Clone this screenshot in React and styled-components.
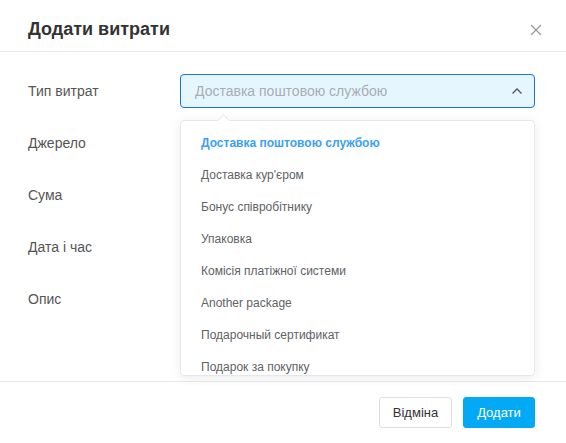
import React from 'react';
import styled, { createGlobalStyle } from 'styled-components';

const GlobalStyle = createGlobalStyle`
  html, body {
    margin: 0;
    padding: 0;
    background: #fff;
  }
  body {
    font-family: "Liberation Sans", Arial, sans-serif;
  }
`;

const Modal = styled.div`
  width: 566px;
  height: 443px;
  display: flex;
  flex-direction: column;
  background: #fff;
  overflow: hidden;
`;

const Header = styled.div`
  height: 52px;
  flex: none;
  box-sizing: border-box;
  display: flex;
  align-items: center;
  justify-content: space-between;
  padding: 8px 23px 0 28px;
  border-bottom: 1px solid #e8e8e8;
  h2 {
    margin: 0;
    font-size: 18px;
    font-weight: 700;
    color: #333;
  }
`;

const Close = styled.button`
  border: 0;
  background: none;
  padding: 0;
  width: 14px;
  height: 14px;
  display: flex;
  cursor: pointer;
`;

const Body = styled.div`
  flex: 1;
  display: flex;
  flex-direction: column;
  gap: 18px;
  padding: 22px 31px 0 28px;
`;

const Row = styled.div`
  display: flex;
  align-items: center;
  height: 34px;
`;

const Label = styled.div`
  width: 152px;
  flex: none;
  font-size: 14px;
  color: #555;
`;

const Field = styled.div`
  position: relative;
  flex: 1;
  height: 34px;
`;

const Select = styled.div`
  height: 100%;
  box-sizing: border-box;
  display: flex;
  align-items: center;
  justify-content: space-between;
  padding: 0 11px 0 14px;
  background: #e6f6fe;
  border: 1px solid #1a73e8;
  border-radius: 4px;
  font-size: 14px;
  color: #a8adb3;
`;

const Input = styled.div`
  height: 100%;
  box-sizing: border-box;
  border: 1px solid #dcdfe6;
  border-radius: 4px;
`;

const Dropdown = styled.div`
  position: absolute;
  top: 46px;
  left: 0;
  right: 0;
  height: 256px;
  box-sizing: border-box;
  background: #fff;
  border: 1px solid #e4e7ed;
  border-radius: 4px;
  box-shadow: 0 2px 12px rgba(0, 0, 0, 0.08);
  z-index: 10;
  &::before {
    content: '';
    position: absolute;
    top: -5px;
    left: 38px;
    width: 8px;
    height: 8px;
    background: #fff;
    border-left: 1px solid #e4e7ed;
    border-top: 1px solid #e4e7ed;
    transform: rotate(45deg);
  }
`;

const List = styled.ul`
  list-style: none;
  margin: 0;
  padding: 6px 0 0;
  height: 100%;
  box-sizing: border-box;
  overflow: hidden;
  border-radius: 4px;
`;

const Option = styled.li`
  height: 32px;
  line-height: 32px;
  padding: 0 20px;
  font-size: 12px;
  color: ${(p) => (p.$active ? '#3aa0f5' : '#606266')};
  font-weight: ${(p) => (p.$active ? 700 : 400)};
  white-space: nowrap;
`;

const Footer = styled.div`
  flex: none;
  display: flex;
  justify-content: flex-end;
  gap: 11px;
  padding: 15px 31px 15px 0;
  border-top: 1px solid #e8e8e8;
`;

const Button = styled.button`
  height: 31px;
  width: ${(p) => (p.$primary ? '72px' : '73px')};
  padding: 0;
  font-family: inherit;
  font-size: 13px;
  border-radius: 3px;
  cursor: pointer;
  border: 1px solid ${(p) => (p.$primary ? '#03a9f4' : '#dcdfe6')};
  background: ${(p) => (p.$primary ? '#03a9f4' : '#fff')};
  color: ${(p) => (p.$primary ? '#fff' : '#333')};
`;

const options = [
  'Доставка поштовою службою',
  'Доставка кур\'єром',
  'Бонус співробітнику',
  'Упаковка',
  'Комісія платіжної системи',
  'Another package',
  'Подарочный сертификат',
  'Подарок за покупку',
];

const labels = ['Джерело', 'Сума', 'Дата і час', 'Опис'];

const App = () => (
  <>
    <GlobalStyle />
    <Modal>
      <Header>
        <h2>Додати витрати</h2>
        <Close aria-label="close">
          <svg width="14" height="14" viewBox="0 0 14 14">
            <path d="M2 2L12 12M12 2L2 12" stroke="#999" strokeWidth="1.2" fill="none" />
          </svg>
        </Close>
      </Header>
      <Body>
        <Row>
          <Label>Тип витрат</Label>
          <Field>
            <Select>
              <span>Доставка поштовою службою</span>
              <svg width="12" height="8" viewBox="0 0 12 8">
                <path d="M1.5 6.5L6 2L10.5 6.5" stroke="#555" strokeWidth="1.3" fill="none" />
              </svg>
            </Select>
            <Dropdown>
              <List>
                {options.map((o, i) => (
                  <Option key={o} $active={i === 0}>
                    {o}
                  </Option>
                ))}
              </List>
            </Dropdown>
          </Field>
        </Row>
        {labels.map((l) => (
          <Row key={l}>
            <Label>{l}</Label>
            <Field>
              <Input />
            </Field>
          </Row>
        ))}
      </Body>
      <Footer>
        <Button>Відміна</Button>
        <Button $primary>Додати</Button>
      </Footer>
    </Modal>
  </>
);

export default App;
